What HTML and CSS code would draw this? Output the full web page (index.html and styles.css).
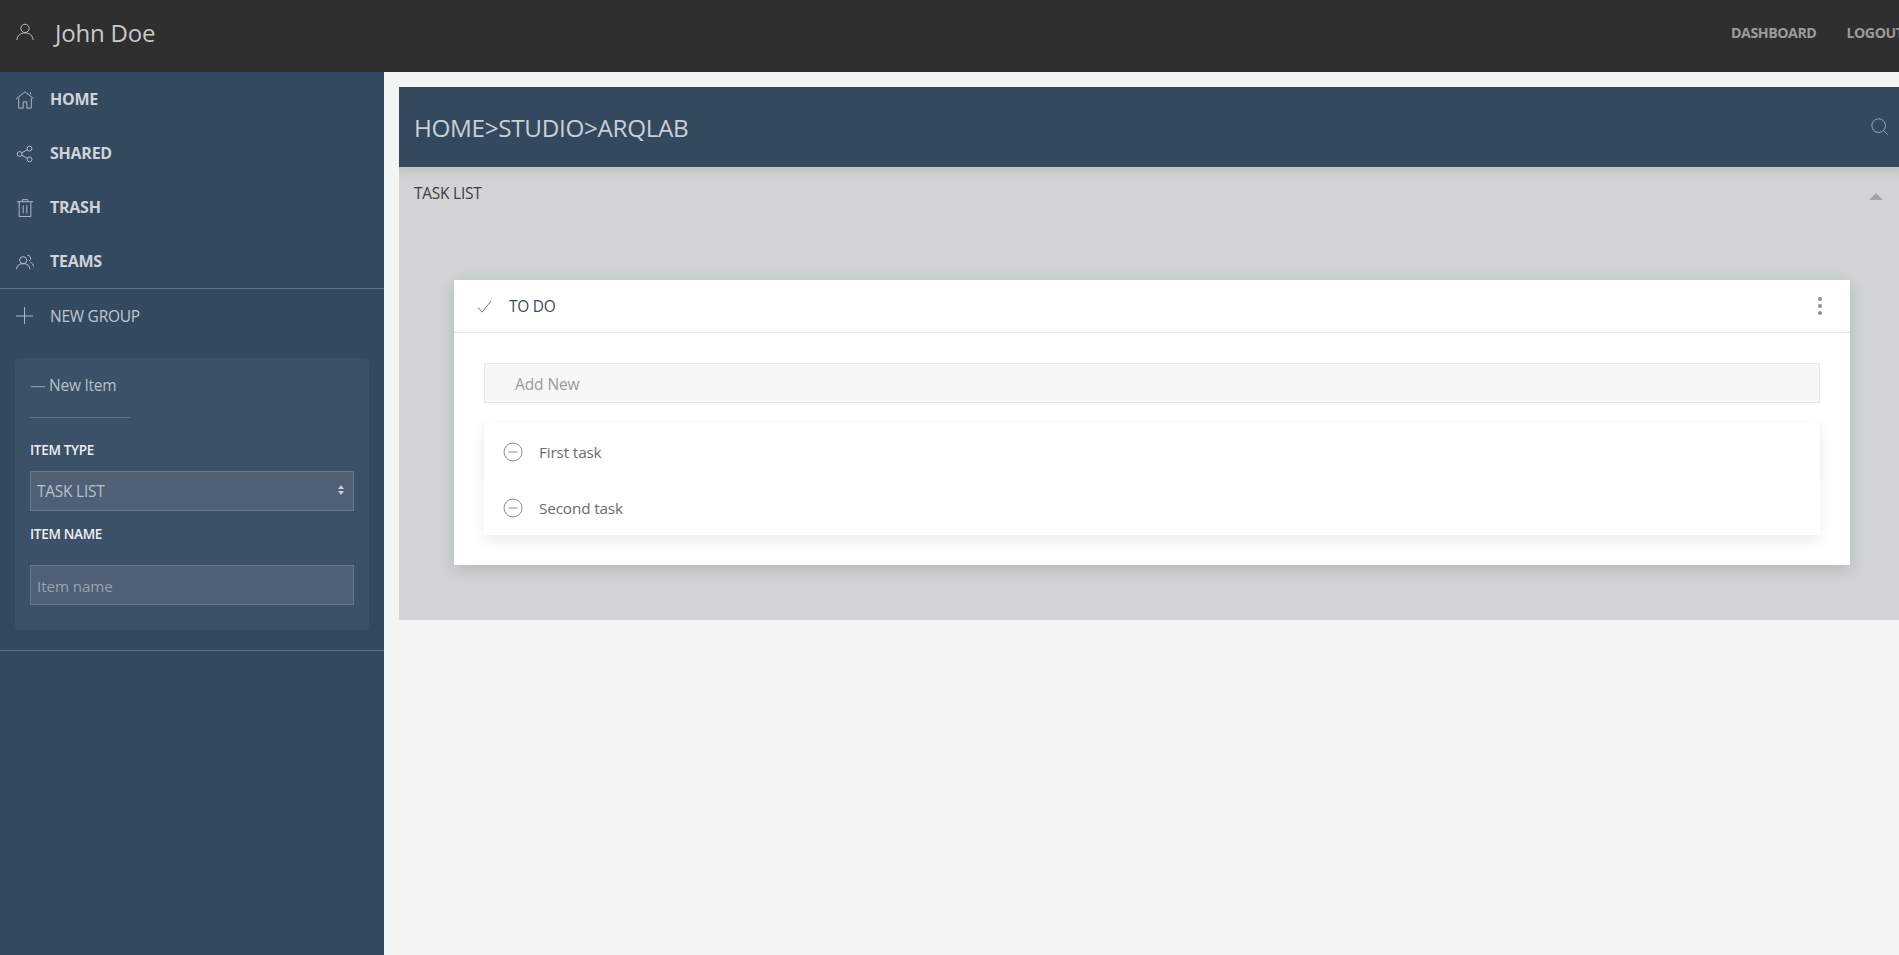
FILE: index.html
```html
<!DOCTYPE html>
<html lang="en">
<head>
<meta charset="utf-8">
<title>Task list</title>
<link rel="stylesheet" href="styles.css">
</head>
<body>
<header class="topbar">
  <div class="user">
    <svg class="user-icon" viewBox="0 0 20 20"><circle cx="10" cy="6" r="4.6"/><path d="M1 19c.4-5 3.6-8 9-8s8.600 3 9 8"/></svg>
    <span class="user-name">John Doe</span>
  </div>
  <nav class="topnav"><a>DASHBOARD</a><a>LOGOUT</a></nav>
</header>
<div class="layout">
  <aside class="sidebar">
    <ul class="menu">
      <li class="menu-item"><svg class="ico" viewBox="0 0 20 20"><path d="M0 9 10 .8l9.500 7.700M3 8v11h5v-7h4v7h5V8M16 1.500V4"/></svg><b>HOME</b></li>
      <li class="menu-item"><svg class="ico" viewBox="0 0 20 20"><circle cx="4" cy="10" r="2.700"/><circle cx="15" cy="4" r="2.700"/><circle cx="15" cy="16" r="2.700"/><path d="M6.400 8.700 12.600 5.300M6.400 11.300l6.200 3.400"/></svg><b>SHARED</b></li>
      <li class="menu-item"><svg class="ico" viewBox="0 0 20 20"><path d="M1 3h18M7 3V.7h6V3M3.500 3v16.500h13V3M8 7v9M12 7v9"/></svg><b>TRASH</b></li>
      <li class="menu-item"><svg class="ico" viewBox="0 0 20 20"><circle cx="8" cy="8" r="4"/><path d="M.5 18c.3-4 3-6.200 7.500-6.200s7.200 2.200 7.500 6.200M12.500 2.500a3.500 3.500 0 0 1 2 6.500M16 10.500c2 .7 3.200 2.300 3.500 4.500"/></svg><b>TEAMS</b></li>
    </ul>
    <div class="new-group"><svg class="ico" viewBox="0 0 20 20"><path d="M0 10h19M9.500 0v19"/></svg><span>NEW GROUP</span></div>
    <form class="new-item">
      <div class="new-item-title"><span class="dash">—</span> New Item</div>
      <div class="rule"></div>
      <div class="field-label">ITEM TYPE</div>
      <div class="select">
        <span>TASK LIST</span>
        <span class="arrows"><i class="arrow-up"></i><i class="arrow-down"></i></span>
      </div>
      <div class="field-label name-label">ITEM NAME</div>
      <div class="text-input">Item name</div>
    </form>
    <div class="side-end"></div>
  </aside>
  <main class="main">
    <section class="panel">
      <div class="panel-head">
        <h1>HOME&gt;STUDIO&gt;ARQLAB</h1>
        <svg class="search" viewBox="0 0 20 20"><circle cx="8.500" cy="8.500" r="7.600"/><path d="M14 14l4.500 4.500"/></svg>
      </div>
      <div class="panel-body">
        <div class="panel-sub"><span>TASK LIST</span><i class="caret"></i></div>
        <div class="card">
          <div class="card-head">
            <svg class="check" viewBox="0 0 16 16"><path d="M1 9l4.500 5L15 2"/></svg>
            <span class="card-title">TO DO</span>
            <span class="dots"><i></i><i></i><i></i></span>
          </div>
          <div class="card-body">
            <div class="add-new">Add New</div>
            <ul class="tasks">
              <li class="task"><svg class="minus" viewBox="0 0 20 20"><circle cx="10" cy="10" r="9"/><path d="M5.500 10h9"/></svg><span>First task</span></li>
              <li class="task"><svg class="minus" viewBox="0 0 20 20"><circle cx="10" cy="10" r="9"/><path d="M5.500 10h9"/></svg><span>Second task</span></li>
            </ul>
          </div>
        </div>
      </div>
    </section>
  </main>
</div>
</body>
</html>
```
FILE: styles.css
```css
* { box-sizing: border-box; }
html, body { margin: 0; height: 955px; overflow: hidden; }
body { font-family: "Open Sans", "Noto Sans", sans-serif; background: #f3f5f4; color: #444; width: 1899px; }
ul { list-style: none; margin: 0; padding: 0; }
svg { fill: none; stroke: currentColor; stroke-width: 1; flex: none; display: block; }

.topbar { height: 72px; background: #2f2f2f; display: flex; justify-content: space-between; white-space: nowrap; }
.user { display: flex; align-items: center; padding: 0 0 7px 16px; color: #c9c9c9; }
.user-icon { width: 18px; height: 18px; margin-right: 21px; position: relative; top: -1px; }
.user-name { font-size: 24px; line-height: 30px; letter-spacing: -.2px; }
.topnav { display: flex; align-items: center; gap: 30px; width: 168px; flex: none; padding: 0 0 7px 0; margin-left: auto; overflow: hidden; }
.topnav a { font-size: 14.200px; font-weight: 700; color: #9c9c9c; letter-spacing: -.45px; flex: none; }

.layout { display: flex; height: 883px; }
.sidebar { width: 384px; flex: none; background: #34495e; color: #c8d0d8; }
.menu { padding-top: 0; border-bottom: 1px solid #5d6f82; height: 217px; }
.menu-item { height: 54px; display: flex; align-items: center; padding-left: 16px; }
.menu-item b { font-size: 16px; font-weight: 700; letter-spacing: -.25px; color: #cdd4db; }
.ico { width: 18px; height: 18px; margin-right: 16px; position: relative; top: 1px; color: #bcc6cf; }
.new-group { height: 53px; display: flex; align-items: center; padding-left: 16px; font-size: 15.500px; letter-spacing: -.25px; color: #bfc8d1; }
.new-group .ico { top: 0; }

.new-item { margin: 16px 15px 0; width: 354px; height: 272px; background: #3c5068; border-radius: 4px; padding: 16px 15px 0; }
.new-item-title { font-size: 15.500px; line-height: 22px; color: #b5c0ca; letter-spacing: -.25px; }
.dash { color: #8697a7; }
.rule { width: 100px; border-top: 1px solid #62758a; margin-top: 21px; }
.field-label { font-size: 13.500px; font-weight: 600; color: #eef1f4; line-height: 18px; margin-top: 23px; letter-spacing: -.3px; }
.select { height: 40px; margin-top: 12px; background: #4f6075; border: 1px solid #67788c; display: flex; justify-content: space-between; align-items: center; padding: 0 6px; font-size: 15.500px; color: #b6c0ca; letter-spacing: -.25px; }
.arrows { display: flex; flex-direction: column; gap: 2px; margin-top: -2px; margin-right: 3px; }
.arrow-up, .arrow-down { display: block; width: 0; height: 0; border-left: 3px solid transparent; border-right: 3px solid transparent; }
.arrow-up { border-bottom: 4px solid #c8d0d8; }
.arrow-down { border-top: 4px solid #c8d0d8; }
.name-label { margin-top: 14px; }
.text-input { height: 40px; margin-top: 22px; background: #4f6075; border: 1px solid #67788c; display: flex; align-items: center; padding: 1px 6px 0; font-size: 15.200px; color: #95a3b0; letter-spacing: -.1px; }
.side-end { border-top: 1px solid #5d6f82; margin-top: 20px; }

.main { flex: 1; min-width: 0; padding: 15px 0 0 15px; overflow: hidden; }
.panel { width: 1500px; }
.panel-head { height: 80px; background: #34495e; display: flex; align-items: center; justify-content: space-between; padding: 2px 0 0 15px; color: #c7d0d8; width: 1500px; position: relative; }
.panel-head h1 { margin: 0; font-size: 24.300px; font-weight: 400; letter-spacing: -.35px; line-height: 32px; }
.search { width: 18px; height: 18px; position: absolute; left: 1472px; top: 31px; color: #9fb0be; }
.panel-body { height: 453px; background: #d0d4d5; box-shadow: inset 0 12px 12px -10px rgba(0,0,0,.12); padding: 0 0 0 55px; }
.panel-sub { height: 113px; margin-left: -40px; padding-top: 16px; font-size: 15.500px; line-height: 20px; color: #3d3d3d; letter-spacing: -.25px; display: flex; justify-content: space-between; }
.caret { width: 0; height: 0; border-left: 7px solid transparent; border-right: 7px solid transparent; border-bottom: 7px solid #a2a5a6; margin: 10px 13px 0 0; position: relative; left: -3px; }
.card { width: 1396px; height: 285px; background: #fff; box-shadow: 0 4px 16px rgba(0,0,0,.14); }
.card-head { height: 53px; border-bottom: 1px solid #e6e6e6; display: flex; align-items: center; padding: 0 25px 0 23px; }
.check { width: 15px; height: 15px; color: #666; margin-right: 17px; }
.card-title { font-size: 15.500px; color: #3b4a5a; letter-spacing: -.25px; flex: 1; }
.dots { display: flex; flex-direction: column; gap: 3px; margin-right: 3px; }
.dots i { display: block; width: 4px; height: 4px; border-radius: 50%; background: #8e8e8e; }
.card-body { padding: 30px 30px 0; }
.add-new { height: 40px; background: #f7f7f7; border: 1px solid #e6e6e6; display: flex; align-items: center; padding: 1px 0 0 30px; font-size: 15.500px; color: #9a9a9a; letter-spacing: -.1px; }
.tasks { margin-top: 20px; height: 112px; background: #fff; box-shadow: 0 5px 14px rgba(0,0,0,.08); }
.task { height: 56px; display: flex; align-items: center; padding: 1px 0 0 19px; font-size: 15.300px; color: #6b6b6b; letter-spacing: -.15px; }
.task:first-child { box-shadow: 0 1px 3px rgba(0,0,0,.015); }
.minus { width: 20px; height: 20px; color: #8c8c8c; margin-right: 16px; }
```
